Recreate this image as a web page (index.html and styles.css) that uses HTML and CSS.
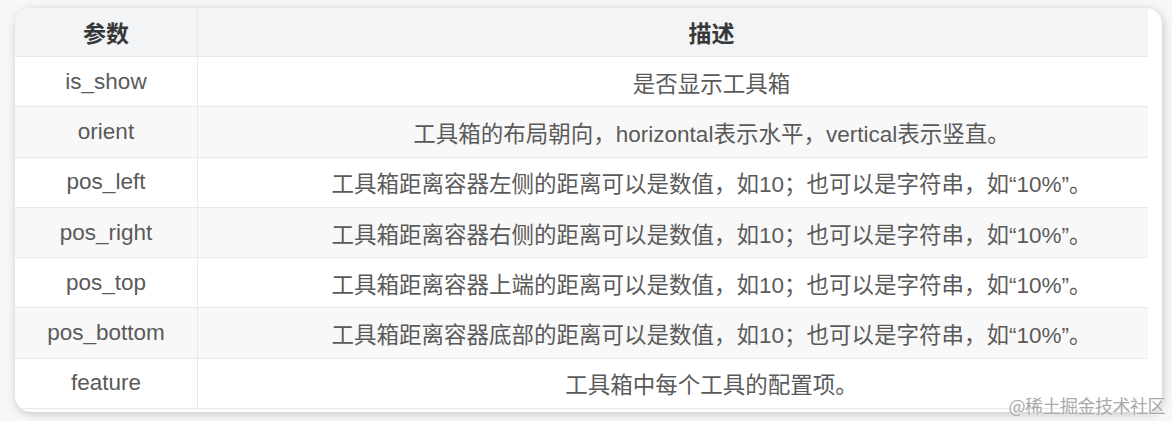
FILE: index.html
```html
<!DOCTYPE html>
<html lang="zh-CN">
<head>
    <meta charset="UTF-8">
    <meta name="viewport" content="width=device-width, initial-scale=1.0">
    <title>工具箱参数</title>
    <link rel="stylesheet" href="styles.css">
</head>
<body>
    <div class="card">
        <table class="params">
            <thead>
                <tr>
                    <th class="col-name">参数</th>
                    <th class="col-desc">描述</th>
                </tr>
            </thead>
            <tbody>
                <tr><td>is_show</td><td class="col-desc">是否显示工具箱</td></tr>
                <tr><td>orient</td><td class="col-desc">工具箱的布局朝向，horizontal表示水平，vertical表示竖直。</td></tr>
                <tr><td>pos_left</td><td class="col-desc">工具箱距离容器左侧的距离可以是数值，如10；也可以是字符串，如“10%”。</td></tr>
                <tr><td>pos_right</td><td class="col-desc">工具箱距离容器右侧的距离可以是数值，如10；也可以是字符串，如“10%”。</td></tr>
                <tr><td>pos_top</td><td class="col-desc">工具箱距离容器上端的距离可以是数值，如10；也可以是字符串，如“10%”。</td></tr>
                <tr><td>pos_bottom</td><td class="col-desc">工具箱距离容器底部的距离可以是数值，如10；也可以是字符串，如“10%”。</td></tr>
                <tr><td>feature</td><td class="col-desc">工具箱中每个工具的配置项。</td></tr>
            </tbody>
        </table>
    </div>
    <div class="watermark">@稀土掘金技术社区</div>
</body>
</html>
```

FILE: styles.css
```css
body {
    margin: 0;
    padding: 8px 10px 9px 15px;
    background-color: #f7f7f7;
    font-family: "Liberation Sans", Arial, "Noto Sans CJK SC", sans-serif;
    color: #5a5a5a;
}
.card {
    width: 1147px;
    height: 404px;
    padding-right: 14px;
    box-sizing: border-box;
    background-color: #fff;
    border-radius: 16px;
    overflow: hidden;
    box-shadow: 1px 2px 10px rgba(0, 0, 0, 0.2);
}
.params {
    width: 100%;
    border-collapse: collapse;
    font-size: 22.5px;
}
.params th, .params td {
    text-align: center;
    padding: 0;
    border-bottom: 1px solid #e9e9e9;
}
.params th + th, .params td + td {
    border-left: 1px solid #e9e9e9;
}
.params th {
    height: 48px;
    background-color: #f3f4f5;
    color: #383838;
    font-size: 23px;
    font-weight: bold;
}
.params td {
    height: 49.3px;
}
.params tbody tr:nth-child(even) td {
    background-color: #f8f8f8;
}
.col-name {
    width: 182px;
}
.params .col-desc {
    padding-left: 77px;
    white-space: nowrap;
}
.watermark {
    position: absolute;
    right: 7px;
    top: 392px;
    font-family: "Noto Sans CJK SC", sans-serif;
    font-size: 18px;
    color: #aaa;
    letter-spacing: -0.5px;
    text-shadow: 0 0 2px #fff;
}
```
